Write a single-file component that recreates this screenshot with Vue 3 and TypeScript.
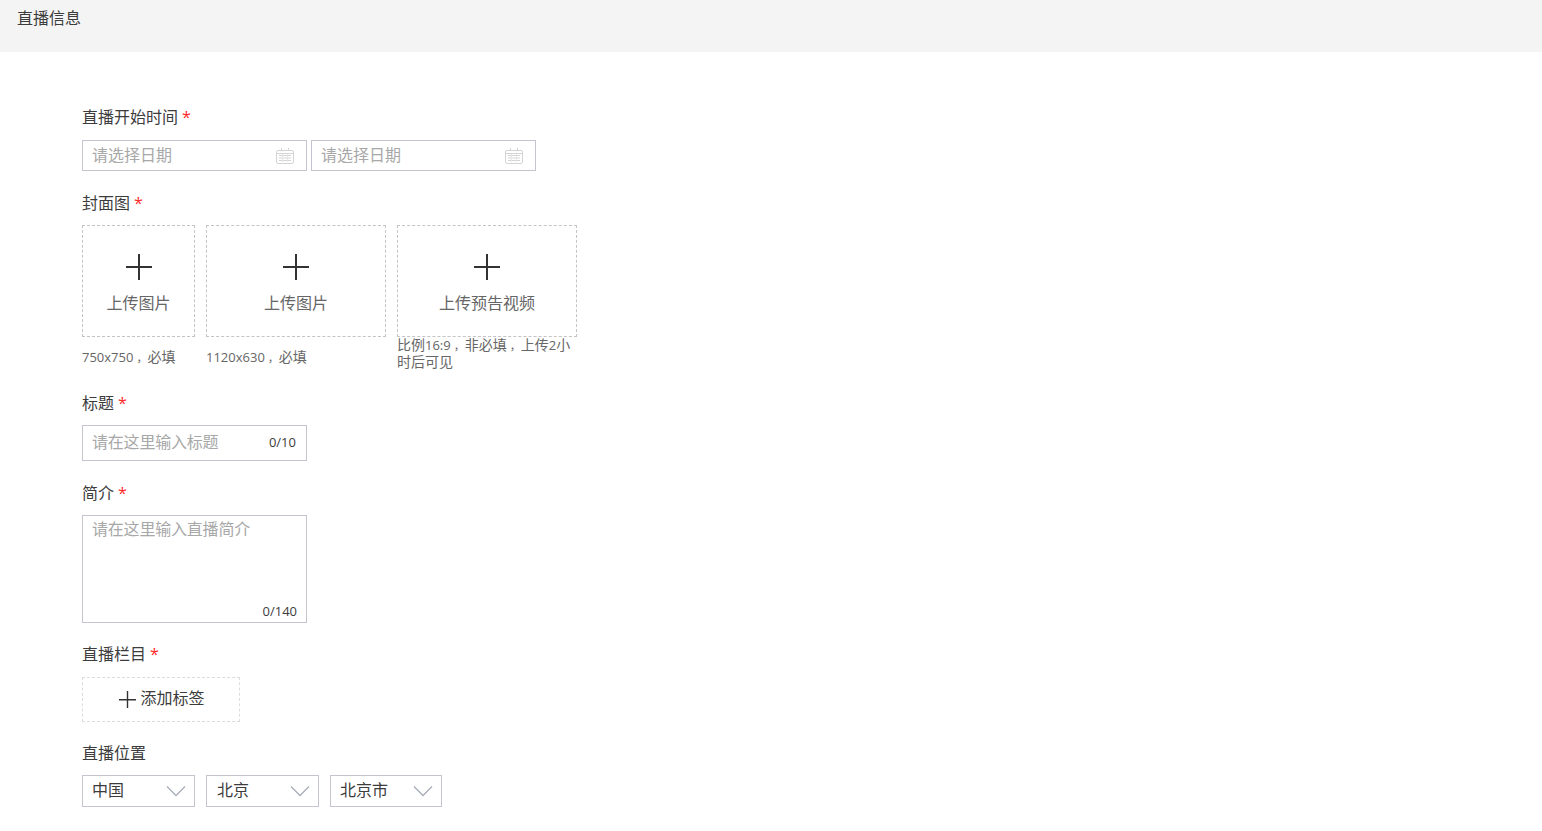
<script setup lang="ts">
interface Upload { label: string; lines: string[]; cls: string }
interface Seg { text: string; cls: string }
const uploads: Upload[] = [
  { label: '上传图片', lines: ['750x750，必填'], cls: 'narrow' },
  { label: '上传图片', lines: ['1120x630，必填'], cls: 'wide' },
  { label: '上传预告视频', lines: ['比例16:9，非必填，上传2小', '时后可见'], cls: 'wide top' },
]
const places: string[] = ['中国', '北京', '北京市']

function segments(line: string): Seg[] {
  return line
    .split(/([0-9x:]+|，)/)
    .filter((s) => s.length > 0)
    .map((s) => ({
      text: s,
      cls: s === '，' ? 'comma' : /^[0-9x:]+$/.test(s) ? 'latin' : '',
    }))
}
</script>

<template>
  <div class="page">
    <header class="head">直播信息</header>
    <form class="form">
      <section class="row r-time">
        <div class="label gap12">直播开始时间<i>*</i></div>
        <div class="dates">
          <div v-for="n in 2" :key="n" class="box date">
            <span class="ph">请选择日期</span>
            <svg width="18" height="16" viewBox="0 0 18 16" fill="none" stroke="#d4d4d4" stroke-width="1">
              <rect x="0.5" y="2.5" width="17" height="13" rx="1.5" />
              <path d="M0.5 5.5h17M3 7.5h12M3 10h12M3 12.5h12M5.5 0v3M12.5 0v3" />
              <path d="M6.5 6v8M11.5 6v8" stroke="#e6e6e6" />
            </svg>
          </div>
        </div>
      </section>

      <section class="row r-cover">
        <div class="label">封面图<i>*</i></div>
        <div class="uploads">
          <div v-for="u in uploads" :key="u.lines[0]" class="upload" :class="u.cls">
            <div class="drop">
              <svg width="26" height="26" viewBox="0 0 26 26" fill="#333">
                <path d="M0 12h26v2H0zM12 0h2v26h-2z" />
              </svg>
              <span>{{ u.label }}</span>
            </div>
            <div class="hint">
              <div v-for="l in u.lines" :key="l" class="line">
                <span v-for="(s, i) in segments(l)" :key="i" :class="s.cls">{{ s.text }}</span>
              </div>
            </div>
          </div>
        </div>
      </section>

      <section class="row r-title">
        <div class="label">标题<i>*</i></div>
        <div class="box title">
          <span class="ph">请在这里输入标题</span>
          <span class="count">0/10</span>
        </div>
      </section>

      <section class="row r-intro">
        <div class="label">简介<i>*</i></div>
        <div class="box intro">
          <span class="ph">请在这里输入直播简介</span>
          <span class="count">0/140</span>
        </div>
      </section>

      <section class="row r-cat">
        <div class="label gap12">直播栏目<i>*</i></div>
        <div class="tag">
          <svg width="17" height="17" viewBox="0 0 17 17" fill="#333">
            <path d="M0 8h17v1.4H0zM7.8 0h1.4v17H7.8z" />
          </svg>
          <span>添加标签</span>
        </div>
      </section>

      <section class="row r-place">
        <div class="label">直播位置</div>
        <div class="selects">
          <div v-for="p in places" :key="p" class="box sel">
            <span>{{ p }}</span>
            <svg width="20" height="12" viewBox="0 0 20 12" fill="none" stroke="#a9adb8" stroke-width="1.3">
              <path d="M1 1.5l9 9 9-9" />
            </svg>
          </div>
        </div>
      </section>
    </form>
  </div>
</template>

<style>
html, body { margin: 0; background: #fff; }
</style>

<style scoped>
.page {
  height: 831px;
  overflow: hidden;
  font-family: "Open Sans", "Noto Sans CJK SC", sans-serif;
  color: #3c3c3c;
  font-size: 16px;
  background: #fff;
}
.head {
  height: 52px;
  box-sizing: border-box;
  padding: 7px 17px 0;
  line-height: 22px;
  background: #f4f4f4;
}
.form { padding: 54px 0 0 82px; }
.row { display: flex; flex-direction: column; align-items: flex-start; }
.label { height: 22px; line-height: 22px; margin-bottom: 11px; white-space: nowrap; }
.label.gap12 { margin-bottom: 12px; }
.label i { color: #ff2a2a; font-style: normal; margin-left: 4px; }
.box {
  box-sizing: border-box;
  border: 1px solid #c4c4d0;
  background: #fff;
  position: relative;
}
.ph { color: #a8a8a8; }
.dates { display: flex; gap: 4px; }
.date {
  width: 225px; height: 31px;
  display: flex; align-items: center; justify-content: space-between;
  padding: 0 12px 0 9px;
  line-height: 29px;
}
.r-cover { margin-top: 21px; }
.uploads { display: flex; gap: 11px; }
.upload { width: 180px; }
.upload.narrow { width: 113px; }
.drop {
  box-sizing: border-box;
  height: 112px;
  border: 1px dashed #c4c4c4;
  display: flex; flex-direction: column; align-items: center;
  padding-top: 28px;
  color: #666;
}
.drop span { margin-top: 12px; line-height: 22px; }
.hint {
  padding-top: 11px;
  height: 29px;
  box-sizing: border-box;
  font-size: 14px;
  color: #666;
}
.line { display: flex; align-items: baseline; height: 17px; white-space: nowrap; }
.line span { display: block; line-height: 17px; }
.line .latin { font-size: 13px; }
.line .comma { font-size: 11px; margin-left: 3px; }
.top .hint { padding-top: 0; margin-top: -1px; height: 35px; }
.r-title { margin-top: 21px; }
.title {
  width: 225px; height: 36px;
  display: flex; align-items: center; justify-content: space-between;
  padding: 0 10px 0 9px;
}
.title .ph { margin-bottom: 4px; letter-spacing: -0.2px; }
.title .count { margin-bottom: 2px; }
.count { font-size: 13px; color: #3c3c3c; }
.r-intro { margin-top: 21px; }
.intro {
  width: 225px; height: 108px;
  padding: 1px 9px;
  line-height: 24px;
}
.intro .ph { letter-spacing: -0.2px; }
.intro .count { position: absolute; right: 9px; bottom: 2px; line-height: 18px; }
.r-cat { margin-top: 20px; }
.tag {
  box-sizing: border-box;
  width: 158px; height: 45px;
  border: 1px dashed #dcdcdc;
  display: flex; align-items: center; justify-content: center;
  gap: 4px;
}
.tag svg { margin-left: 2px; margin-bottom: 1px; }
.tag span { margin-bottom: 6px; }
.r-place { margin-top: 20px; }
.selects { display: flex; gap: 11px; }
.sel {
  width: 113px; height: 32px;
  display: flex; align-items: center; justify-content: space-between;
  padding: 0 8px 0 10px;
}
.sel:first-child { padding-left: 9px; }
.sel span { margin-bottom: 4px; }
.sel:nth-child(3) { width: 112px; padding-left: 9px; }
</style>
